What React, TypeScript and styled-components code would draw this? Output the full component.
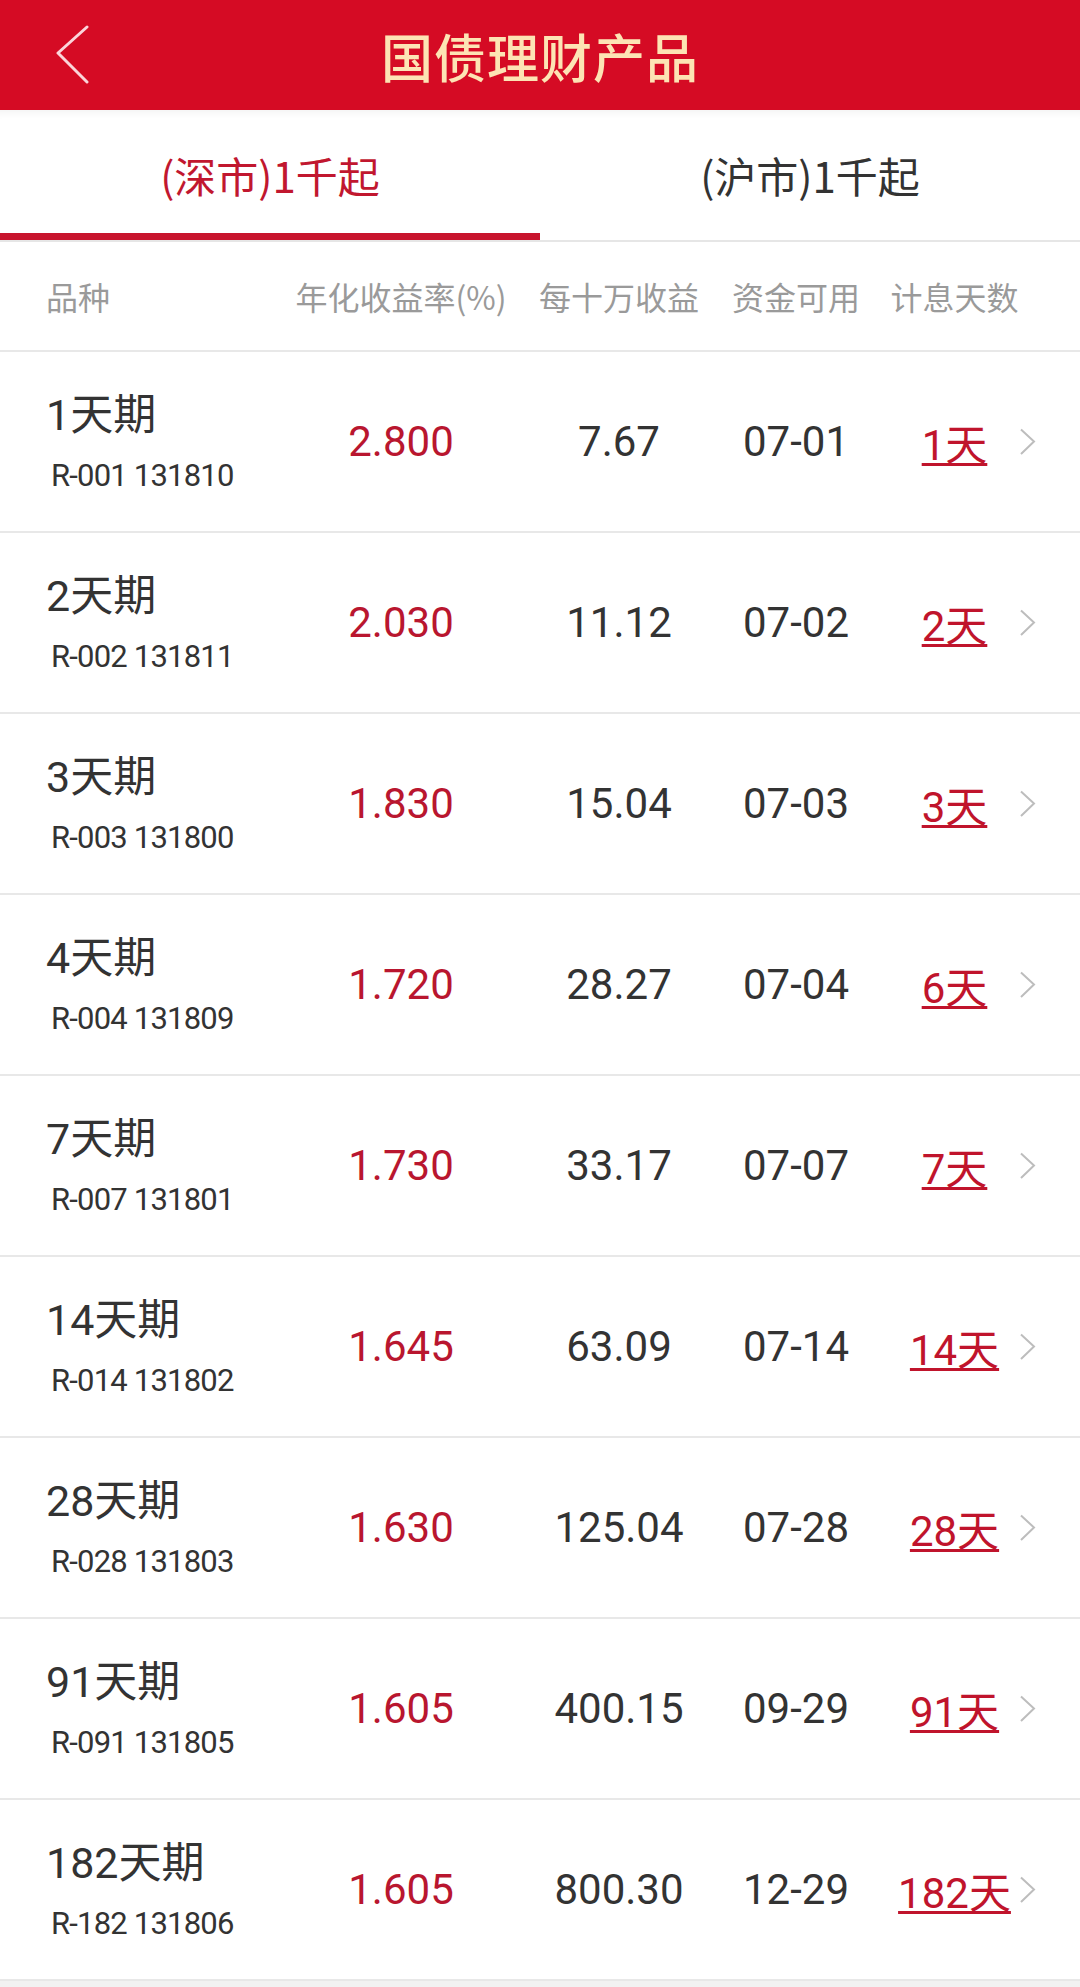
import styled, { createGlobalStyle } from "styled-components";

const GlobalStyle = createGlobalStyle`
  html, body {
    margin: 0;
    padding: 0;
    background: #f2f2f2;
  }
  body {
    font-family: Roboto, "Noto Sans CJK SC", sans-serif;
    color: #333;
  }
`;

const products = [
  { name: "1天期", code: "R-001 131810", rate: "2.800", income: "7.67", date: "07-01", days: "1天" },
  { name: "2天期", code: "R-002 131811", rate: "2.030", income: "11.12", date: "07-02", days: "2天" },
  { name: "3天期", code: "R-003 131800", rate: "1.830", income: "15.04", date: "07-03", days: "3天" },
  { name: "4天期", code: "R-004 131809", rate: "1.720", income: "28.27", date: "07-04", days: "6天" },
  { name: "7天期", code: "R-007 131801", rate: "1.730", income: "33.17", date: "07-07", days: "7天" },
  { name: "14天期", code: "R-014 131802", rate: "1.645", income: "63.09", date: "07-14", days: "14天" },
  { name: "28天期", code: "R-028 131803", rate: "1.630", income: "125.04", date: "07-28", days: "28天" },
  { name: "91天期", code: "R-091 131805", rate: "1.605", income: "400.15", date: "09-29", days: "91天" },
  { name: "182天期", code: "R-182 131806", rate: "1.605", income: "800.30", date: "12-29", days: "182天" },
];

export default function App() {
  return (
    <Page>
      <GlobalStyle />
      <TopBar>
        <BackButton aria-label="返回">
          <svg width="34" height="60" viewBox="0 0 34 60">
            <polyline
              points="31,2 2,28 31,57"
              fill="none"
              stroke="rgba(255,235,238,0.9)"
              strokeWidth="3"
              strokeLinecap="round"
              strokeLinejoin="round"
            />
          </svg>
        </BackButton>
        <Title>国债理财产品</Title>
        <div />
      </TopBar>

      <Tabs>
        <Tab $active>(深市)1千起</Tab>
        <Tab>(沪市)1千起</Tab>
      </Tabs>

      <HeadRow>
        <HeadCell $align="left">品种</HeadCell>
        <HeadCell>年化收益率(%)</HeadCell>
        <HeadCell>每十万收益</HeadCell>
        <HeadCell>资金可用</HeadCell>
        <HeadCell $days>计息天数</HeadCell>
      </HeadRow>

      <List>
        {products.map((p) => (
          <Row key={p.code}>
            <NameCell>
              <Name>{p.name}</Name>
              <Code>{p.code}</Code>
            </NameCell>
            <Value $red>{p.rate}</Value>
            <Value>{p.income}</Value>
            <Value>{p.date}</Value>
            <DaysCell>
              <Days>{p.days}</Days>
              <svg width="17" height="28" viewBox="0 0 17 28">
                <polyline
                  points="2,1.5 15,13.5 2,26"
                  fill="none"
                  stroke="#bdbdbd"
                  strokeWidth="2"
                />
              </svg>
            </DaysCell>
          </Row>
        ))}
      </List>
    </Page>
  );
}

const Page = styled.div`
  min-height: 100vh;
  background: #f2f2f2;
`;

const TopBar = styled.header`
  height: 110px;
  background: #d50b24;
  display: grid;
  grid-template-columns: 200px 1fr 200px;
  align-items: center;
`;

const BackButton = styled.button`
  border: none;
  background: none;
  padding: 0 0 0 56px;
  display: flex;
  align-items: center;
  justify-self: start;
  cursor: pointer;
`;

const Title = styled.h1`
  margin: 0;
  text-align: center;
  font-family: "Noto Sans CJK SC", sans-serif;
  font-size: 52px;
  font-weight: 500;
  color: #fde4b4;
  letter-spacing: 1px;
`;

const Tabs = styled.nav`
  display: flex;
  background: #fff;
  border-bottom: 2px solid #e6e6e6;
  box-shadow: inset 0 10px 8px -8px rgba(0, 0, 0, 0.06);
`;

const Tab = styled.div<{ $active?: boolean }>`
  flex: 1;
  height: 130px;
  padding-top: 6px;
  box-sizing: border-box;
  display: flex;
  align-items: center;
  justify-content: center;
  font-family: "Noto Sans CJK SC", sans-serif;
  font-size: 42px;
  color: ${(p) => (p.$active ? "#c1172f" : "#333")};
  border-bottom: 7px solid ${(p) => (p.$active ? "#c8142d" : "transparent")};
`;

const gridColumns = `
  display: grid;
  grid-template-columns: 250px 210px 226px 128px 1fr;
  padding: 0 44px 0 46px;
  background: #fff;
  border-bottom: 2px solid #e8e8e8;
`;

const HeadRow = styled.div`
  ${gridColumns}
  height: 108px;
  align-items: center;
`;

const HeadCell = styled.div<{ $align?: "left"; $days?: boolean }>`
  display: flex;
  justify-content: ${(p) => (p.$align === "left" ? "flex-start" : "center")};
  padding: ${(p) => (p.$days ? "0 17px 0 30px" : "0")};
  white-space: nowrap;
  font-family: "Noto Sans CJK SC", sans-serif;
  font-size: 32px;
  color: #9a9a9a;
`;

const List = styled.div`
  display: flex;
  flex-direction: column;
`;

const Row = styled.div`
  ${gridColumns}
  height: 179px;
  align-items: center;
`;

const NameCell = styled.div`
  display: flex;
  flex-direction: column;
  padding-top: 3px;
`;

const Name = styled.div`
  font-size: 43px;
  line-height: 50px;
  color: #333;
  white-space: nowrap;
`;

const Code = styled.div`
  margin-top: 16px;
  padding-left: 5px;
  font-size: 31px;
  line-height: 40px;
  letter-spacing: -0.8px;
  color: #333;
  white-space: nowrap;
`;

const Value = styled.div<{ $red?: boolean }>`
  display: flex;
  justify-content: center;
  font-size: 42px;
  color: ${(p) => (p.$red ? "#b9162f" : "#333")};
  white-space: nowrap;
`;

const DaysCell = styled.div`
  display: flex;
  align-items: center;
`;

const Days = styled.span`
  flex: 1;
  padding-left: 30px;
  text-align: center;
  font-size: 42px;
  color: #c0142c;
  white-space: nowrap;
  text-decoration: underline;
  text-decoration-thickness: 3px;
  text-underline-offset: 3px;
`;
